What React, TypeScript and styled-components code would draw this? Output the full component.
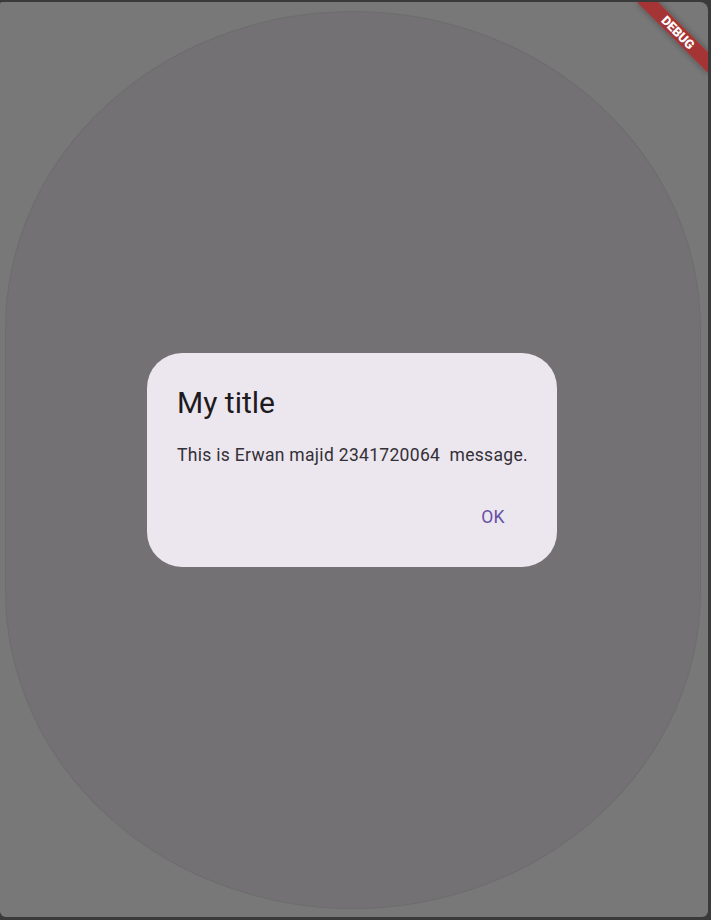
import React from "react";
import styled, { createGlobalStyle } from "styled-components";

const Global = createGlobalStyle`
  html, body { margin: 0; padding: 0; background: #3a3a3a; }
  body { font-family: Roboto, "Noto Sans", sans-serif; }
  * { box-sizing: border-box; }
`;

const Frame = styled.div`
  position: relative;
  width: 708px;
  height: 915px;
  margin-top: 2px;
  background: #787878;
  border-radius: 2px 8px 6px 6px;
  overflow: hidden;
  padding: 10px 8px 9px 6px;
  display: flex;
`;

const Oval = styled.div`
  flex: 1;
  border-radius: 347px / 317px;
  background: #747174;
  box-shadow: 0 0 0 1px rgba(100, 98, 100, 0.5);
  display: flex;
  align-items: center;
  justify-content: center;
`;

const Dialog = styled.div`
  width: 410px;
  margin-right: 2px;
  background: #ece6ee;
  border-radius: 35px;
  padding: 30px 24px 25px 30px;
  display: flex;
  flex-direction: column;
`;

const Title = styled.h2`
  margin: 0;
  font-size: 30px;
  line-height: 40px;
  font-weight: 400;
  color: #1d1b20;
`;

const Body = styled.p`
  margin: 20px 0 0;
  font-size: 17.5px;
  line-height: 25px;
  letter-spacing: 0.31px;
  color: #333037;
  white-space: pre;
`;

const Actions = styled.div`
  margin-top: 24px;
  display: flex;
  justify-content: flex-end;
`;

const TextButton = styled.button`
  border: none;
  background: transparent;
  height: 50px;
  min-width: 80px;
  padding: 0 15px;
  border-radius: 25px;
  font-family: Roboto, "Noto Sans", sans-serif;
  font-size: 17.5px;
  font-weight: 400;
  letter-spacing: 0.12px;
  color: #6750a4;
  cursor: pointer;
`;

const Banner = styled.div`
  position: absolute;
  top: 22.5px;
  right: -20px;
  width: 100px;
  height: 15px;
  transform: rotate(45deg);
  background: rgba(183, 28, 28, 0.72);
  color: #fff;
  font-family: Roboto, "Noto Sans", sans-serif;
  font-weight: 900;
  font-size: 12.75px;
  line-height: 15px;
  text-align: center;
  box-shadow: 0 0 6px rgba(0, 0, 0, 0.35);
`;

export default function App() {
  return (
    <>
      <Global />
      <Frame>
        <Oval>
          <Dialog>
            <Title>My title</Title>
            <Body>{"This is Erwan majid 2341720064  message."}</Body>
            <Actions>
              <TextButton>OK</TextButton>
            </Actions>
          </Dialog>
        </Oval>
        <Banner>DEBUG</Banner>
      </Frame>
    </>
  );
}
